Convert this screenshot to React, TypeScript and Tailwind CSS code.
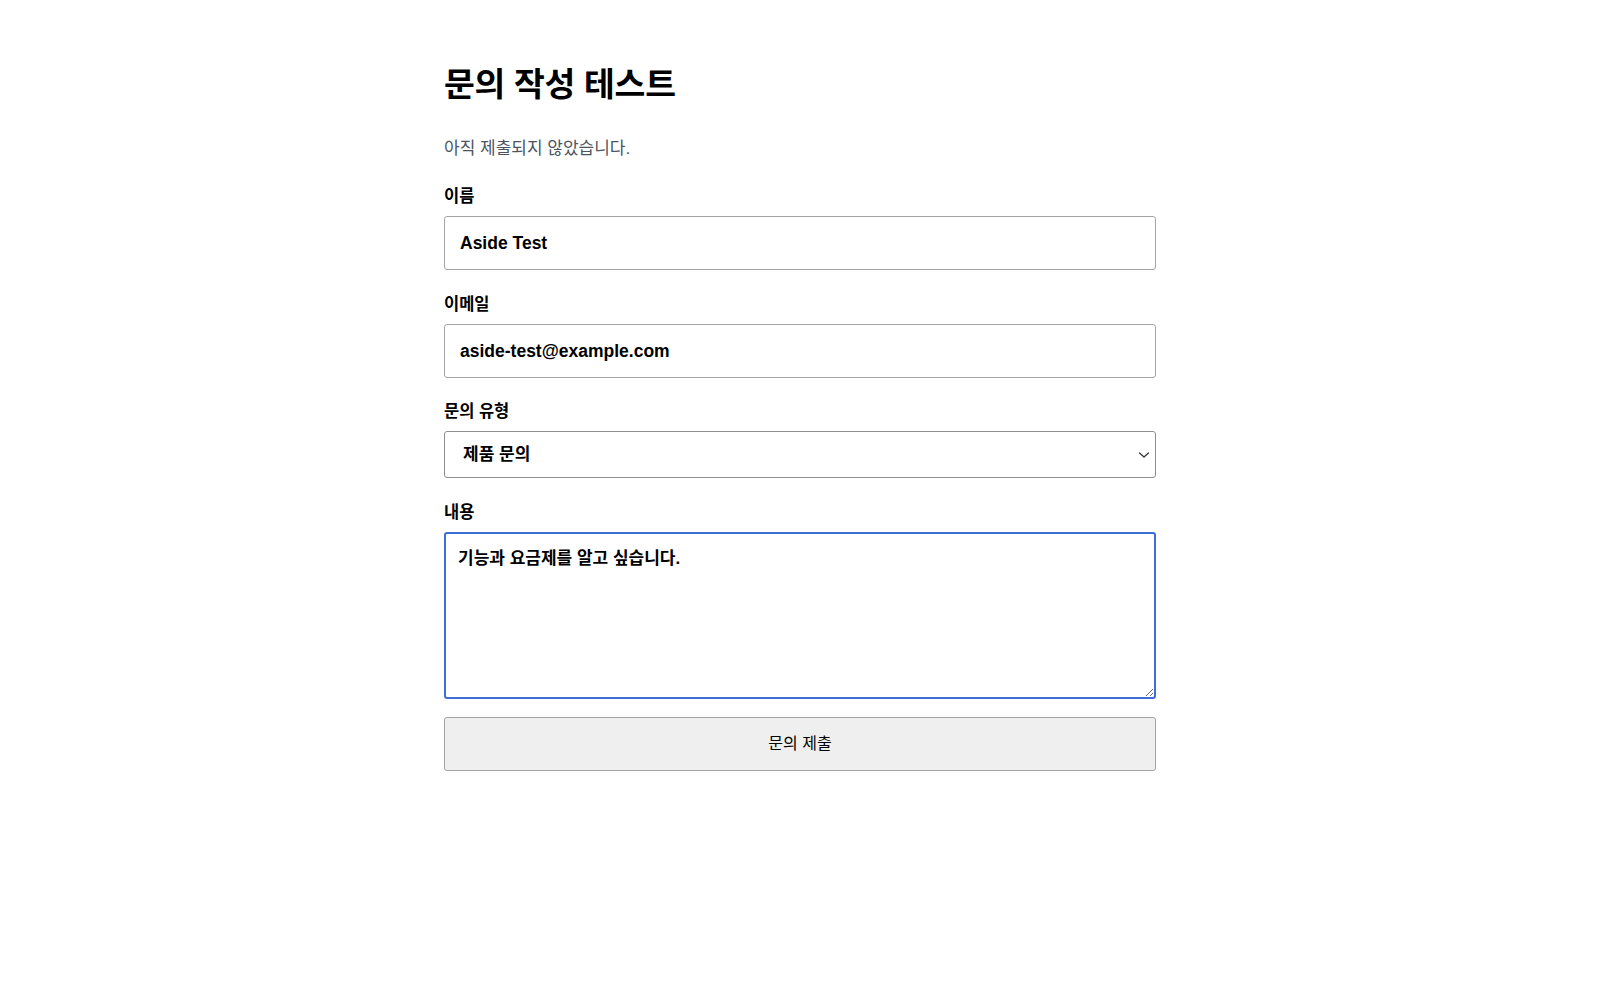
import React from "react";

const font = { fontFamily: '"Liberation Sans", "Noto Sans CJK KR", sans-serif' };

export default function App() {
  return (
    <div className="min-h-[1000px] bg-white text-black" style={font}>
      <main className="mx-auto w-[712px] pt-[64px]">
        <h1 className="text-[33.5px] leading-[41px] font-bold tracking-[-0.3px]">문의 작성 테스트</h1>
        <p className="mt-[32px] text-[17px] leading-6 text-[#4b5563]">아직 제출되지 않았습니다.</p>
        <form className="mt-[23px] flex flex-col" onSubmit={(e) => e.preventDefault()}>
          <label className="block text-[16.5px] leading-6 font-bold">이름</label>
          <input
            readOnly
            defaultValue="Aside Test"
            className="mt-2 h-[54px] w-full rounded-[3px] border-[1.5px] border-[#a3a3a3] pl-[15px] pr-[14px] text-[17.5px] font-bold text-black outline-none"
            style={font}
          />
          <label className="mt-[22px] block text-[16.5px] leading-6 font-bold">이메일</label>
          <input
            readOnly
            defaultValue="aside-test@example.com"
            className="mt-2 h-[54px] w-full rounded-[3px] border-[1.5px] border-[#a3a3a3] pl-[15px] pr-[14px] text-[17.5px] font-bold text-black outline-none"
            style={font}
          />
          <label className="mt-[21px] block text-[16.5px] leading-6 font-bold">문의 유형</label>
          <div className="relative mt-2">
            <select
              defaultValue="product"
              className="h-[47px] w-full appearance-none rounded-[3px] border-[1.5px] border-[#8f8f8f] bg-white pl-[18px] pr-10 text-[17px] font-bold text-black outline-none"
              style={font}
            >
              <option value="product">제품 문의</option>
              <option value="billing">요금 문의</option>
              <option value="etc">기타</option>
            </select>
            <svg
              className="pointer-events-none absolute right-[6px] top-1/2 -translate-y-1/2"
              width="12"
              height="8"
              viewBox="0 0 12 8"
              fill="none"
            >
              <path d="M1.5 2l4.5 4 4.5-4" stroke="#333" strokeWidth="1.3" strokeLinecap="round" strokeLinejoin="round" />
            </svg>
          </div>
          <label className="mt-[22px] block text-[16.5px] leading-6 font-bold">내용</label>
          <textarea
            readOnly
            defaultValue="기능과 요금제를 알고 싶습니다."
            className="mt-2 h-[167px] w-full rounded-[3px] border-2 border-[#3d6fd6] px-[12px] py-[13px] text-[17px] leading-6 font-bold text-black outline-none"
            style={font}
          />
          <button
            type="submit"
            className="mt-[18px] h-[54px] w-full rounded-[3px] border-[1.5px] border-[#a3a3a3] bg-[#efefef] text-[16px] text-black"
            style={font}
          >
            문의 제출
          </button>
        </form>
      </main>
    </div>
  );
}
